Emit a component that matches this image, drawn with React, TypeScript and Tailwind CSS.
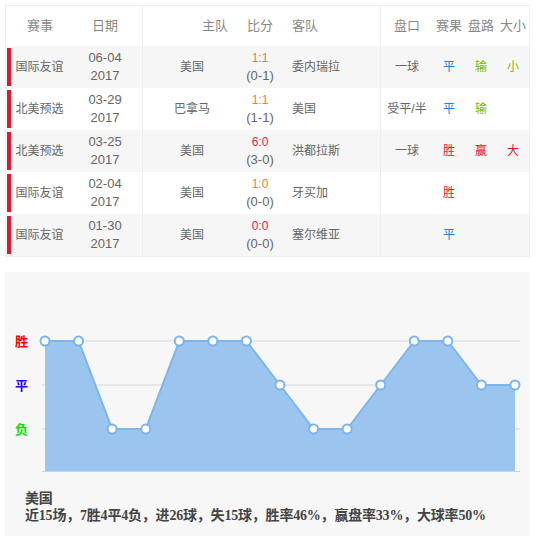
const matches = [
  { league: "国际友谊", date: "06-04", home: "美国", score: "1:1", half: "(0-1)", hot: false, away: "委内瑞拉", line: "一球", result: "平", pan: "输", size: "小" },
  { league: "北美预选", date: "03-29", home: "巴拿马", score: "1:1", half: "(1-1)", hot: false, away: "美国", line: "受平/半", result: "平", pan: "输", size: "" },
  { league: "北美预选", date: "03-25", home: "美国", score: "6:0", half: "(3-0)", hot: true, away: "洪都拉斯", line: "一球", result: "胜", pan: "赢", size: "大" },
  { league: "国际友谊", date: "02-04", home: "美国", score: "1:0", half: "(0-0)", hot: false, away: "牙买加", line: "", result: "胜", pan: "", size: "" },
  { league: "国际友谊", date: "01-30", home: "美国", score: "0:0", half: "(0-0)", hot: true, away: "塞尔维亚", line: "", result: "平", pan: "", size: "" },
];

const colorOf: Record<string, string> = {
  平: "text-[#1a7fe0]",
  胜: "text-[#e5142b]",
  赢: "text-[#e5142b]",
  大: "text-[#e5142b]",
  输: "text-[#7cb800]",
  小: "text-[#7cb800]",
};

// W=0, D=1, L=2
const form = [0, 0, 2, 2, 0, 0, 0, 1, 2, 2, 1, 0, 0, 1, 1];
const levels = [69, 113, 157];

export default function App() {
  const pts = form.map((v, i) => [40 + i * 33.57, levels[v]] as const);
  const linePts = pts.map(([x, y]) => `${x},${y}`).join(" ");
  const areaPts = `40,199 ${linePts} ${pts[pts.length - 1][0]},199`;

  return (
    <div
      className="w-[535px] h-[536px] bg-white pt-[5px] px-[5px] text-[12px] text-[#666]"
      style={{ fontFamily: '"Liberation Sans", "Noto Sans CJK SC", sans-serif' }}
    >
      <div className="w-[525px] border border-[#eee]">
        <div className="flex h-[40px] items-center text-[13px] text-[#888] bg-white">
          <div className="w-[62px] pl-[6px] text-center">赛事</div>
          <div className="w-[75px] h-full flex items-center justify-center border-r border-[#eee]">日期</div>
          <div className="w-[98px] text-right pr-[13px]">主队</div>
          <div className="w-[38px] text-center">比分</div>
          <div className="w-[102px] h-full flex items-center pl-[13px] border-r border-[#eee]">客队</div>
          <div className="w-[52px] text-center">盘口</div>
          <div className="w-[32px] text-center">赛果</div>
          <div className="w-[32px] text-center">盘路</div>
          <div className="w-[32px] text-center">大小</div>
        </div>
        {matches.map((m, i) => (
          <div key={i} className={`flex h-[42px] items-center ${i % 2 === 0 ? "bg-[#f6f6f6]" : "bg-white"}`}>
            <div className="w-[62px] h-full flex items-center pl-[1px]">
              <div className="w-[4px] h-[38px] bg-[#e0182f]" />
              <div className="flex-1 text-center">{m.league}</div>
            </div>
            <div className="w-[75px] h-full flex flex-col items-center justify-center leading-[18px] text-[13px] border-r border-[#eee]">
              <span>{m.date}</span>
              <span>2017</span>
            </div>
            <div className="w-[98px] text-center">{m.home}</div>
            <div className="w-[38px] flex flex-col items-center leading-[18px]">
              <span className={m.hot ? "text-[#e8194c]" : "text-[#f27a3a]"}>{m.score}</span>
              <span className="whitespace-nowrap text-[13px]">{m.half}</span>
            </div>
            <div className="w-[102px] h-full flex items-center pl-[13px] border-r border-[#eee]">{m.away}</div>
            <div className="w-[52px] text-center">{m.line}</div>
            <div className={`w-[32px] text-center ${colorOf[m.result] ?? ""}`}>{m.result}</div>
            <div className={`w-[32px] text-center ${colorOf[m.pan] ?? ""}`}>{m.pan}</div>
            <div className={`w-[32px] text-center ${colorOf[m.size] ?? ""}`}>{m.size}</div>
          </div>
        ))}
      </div>

      <div className="mt-[15px] w-[525px] h-[264px] bg-[#f7f7f7]">
        <svg width="525" height="212" className="block">
          {levels.map((y) => (
            <line key={y} x1="37" x2="515" y1={y} y2={y} stroke="#d8d8d8" strokeWidth="1" />
          ))}
          <polygon points={areaPts} fill="#9bc4ee" />
          <line x1="37" x2="515" y1="199.5" y2="199.5" stroke="#c6d6e8" strokeWidth="1" />
          <polyline points={linePts} fill="none" stroke="#7cb5ec" strokeWidth="2" strokeLinejoin="round" />
          {pts.map(([x, y], i) => (
            <circle key={i} cx={x} cy={y} r="4.5" fill="#fff" stroke="#7cb5ec" strokeWidth="2" />
          ))}
          <g fontSize="13" fontWeight="bold" style={{ fontFamily: '"Noto Sans CJK SC", sans-serif' }}>
            <text x="10" y="74" fill="#ff0000">胜</text>
            <text x="10" y="118" fill="#2200ff">平</text>
            <text x="10" y="162" fill="#00e000">负</text>
          </g>
        </svg>
        <div
          className="pl-[20px] pt-[6px] text-[14px] leading-[17px] font-bold text-[#444] tracking-[-0.2px]"
          style={{ fontFamily: '"Liberation Serif", "Noto Sans CJK SC", serif' }}
        >
          <div>美国</div>
          <div>近15场，7胜4平4负，进26球，失15球，胜率46%，赢盘率33%，大球率50%</div>
        </div>
      </div>
    </div>
  );
}
